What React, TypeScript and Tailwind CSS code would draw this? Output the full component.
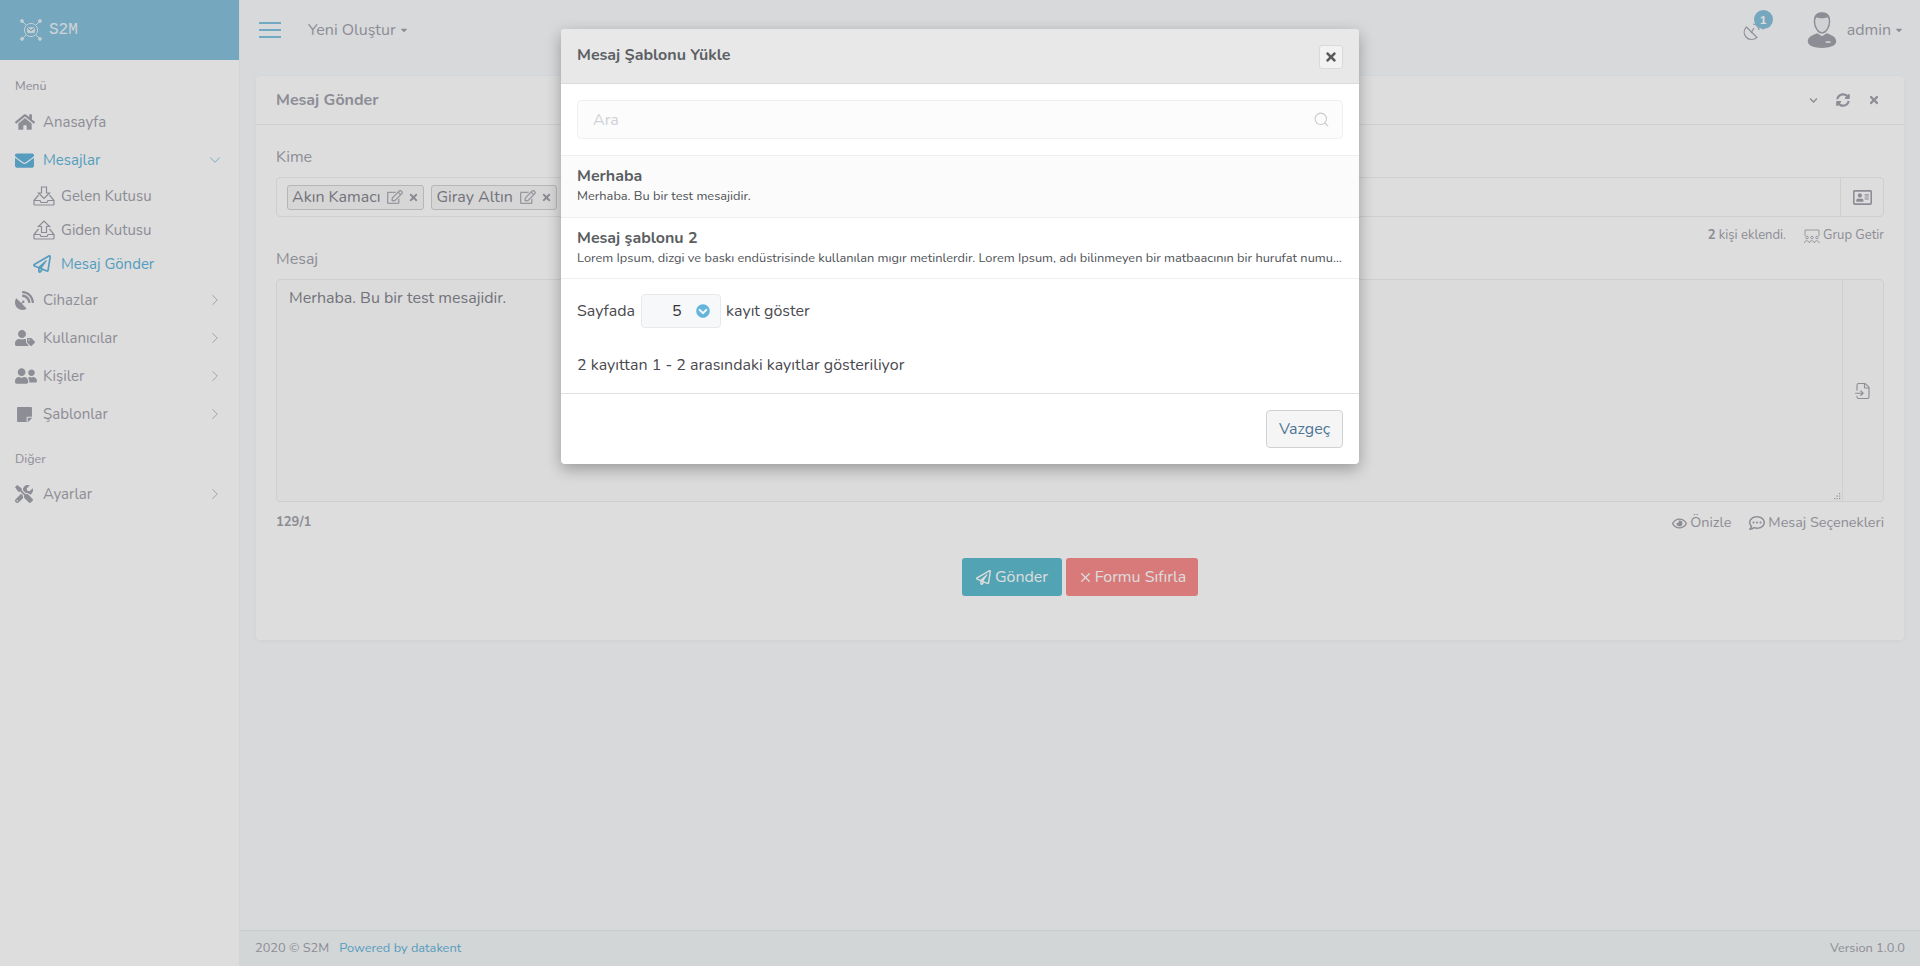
import React from "react";
import { ChevronDown, ChevronRight, X, Search, FileInput } from "lucide-react";
import {
  FaHome, FaEnvelope, FaUserTag, FaUserFriends, FaStickyNote, FaTools, FaSatelliteDish, FaRegPaperPlane,
  FaRegEdit, FaTimes, FaSyncAlt, FaChevronDown, FaRegAddressCard, FaRegEye, FaRegCommentDots, FaCaretDown, FaChevronCircleDown,
} from "react-icons/fa";

const Logo = () => (
  <svg width="22" height="22" viewBox="0 0 22 22" fill="none" stroke="#e4eef3" strokeWidth="1">
    <circle cx="11" cy="11" r="6.6" />
    <rect x="7.6" y="8.8" width="6.8" height="4.8" rx="0.6" fill="#e4eef3" />
    <path d="M7.8 9.2 11 11.6 14.2 9.2" stroke="#75a7be" />
    <path d="M2.5 2.5 6 6M19.5 2.5 16 6M2.5 19.5 6 16M19.5 19.5 16 16" />
    <circle cx="2" cy="2" r="1.4" fill="#e4eef3" /><circle cx="20" cy="2" r="1.4" fill="#e4eef3" />
    <circle cx="2" cy="20" r="1.4" fill="#e4eef3" /><circle cx="20" cy="20" r="1.4" fill="#e4eef3" />
  </svg>
);

const InboxDown = () => (
  <svg width="22" height="20" viewBox="0 0 22 20" fill="none" stroke="#a1a1ad" strokeWidth="1.2">
    <path d="M8.5 1h5v6h3L11 12.500 5.500 7h3z" />
    <path d="M5.500 9 1 14.500V18a1 1 0 0 0 1 1h18a1 1 0 0 0 1-1v-3.500L16.500 9" />
    <path d="M1 14.500h6l1 2h6l1-2h6" />
  </svg>
);
const InboxUp = () => (
  <svg width="22" height="20" viewBox="0 0 22 20" fill="none" stroke="#a1a1ad" strokeWidth="1.200">
    <path d="M8.500 12.500h5v-6h3L11 1 5.500 6.500h3z" />
    <path d="M5.500 9 1 14.500V18a1 1 0 0 0 1 1h18a1 1 0 0 0 1-1v-3.500L16.500 9" />
    <path d="M1 14.500h6l1 2h6l1-2h6" />
  </svg>
);
const DishOutline = () => (
  <svg width="21" height="22" viewBox="0 0 21 22" fill="none" stroke="#a8a8b2" strokeWidth="1.200">
    <path d="M3.500 8 14 18.500C10.500 21.500 5.500 21 3 18 .500 15 .500 11 3.500 8z" />
    <path d="M8 14 11 9" />
    <path d="M10 5a7 7 0 0 1 6 6M12 1.500a11 11 0 0 1 8 9" />
  </svg>
);
const Avatar = () => (
  <svg width="32" height="36" viewBox="0 0 32 38">
    <path d="M1 31c0-5 6-7 10-8.500l5 3 5-3c4 1.500 10 3.500 10 8.500 0 5-7 7-15 7S1 36 1 31z" fill="#a3a3ad" />
    <path d="M8 10c0-6 3-9 8-9s8 3 8 9c0 6-4 12-8 12s-8-6-8-12z" fill="#f2f3f5" stroke="#a3a3ad" strokeWidth="1.500" />
    <path d="M7.500 10C7 4 11 .500 16 .500S25 4 24.500 10c-1-3-2-4-3-4.500-3 1.500-9 1.500-11 0-1 1-2 2-3 4.500z" fill="#a3a3ad" />
    <rect x="20" y="31" width="5" height="1.500" fill="#fff" />
  </svg>
);
const GroupIcon = () => (
  <svg width="16" height="15" viewBox="0 0 16 15" fill="none" stroke="#a8a8b2" strokeWidth="0.900">
    <path d="M1 7V1h14v6" />
    <circle cx="3" cy="8.500" r="1.300" /><circle cx="8" cy="8.500" r="1.300" /><circle cx="13" cy="8.500" r="1.300" />
    <path d="M.5 14c0-3 4-3 5 0M5.500 14c0-3 4-3 5 0M10.500 14c0-3 4-3 5 0" />
  </svg>
);
const Grip = () => (
  <svg width="7" height="7" viewBox="0 0 7 7" fill="#a8a8b2">
    <rect x="5" y="0" width="1.200" height="1.200" /><rect x="2.500" y="2.500" width="1.200" height="1.200" /><rect x="5" y="2.500" width="1.200" height="1.200" />
    <rect x="0" y="5" width="1.200" height="1.200" /><rect x="2.500" y="5" width="1.200" height="1.200" /><rect x="5" y="5" width="1.200" height="1.200" />
  </svg>
);

function NavItem({ icon, label, active, open, plain }: { icon: React.ReactNode; label: string; active?: boolean; open?: boolean; plain?: boolean }) {
  return (
    <div className={`h-[38px] flex items-center pl-[15px] pr-[15px] text-[15px] ${active ? "text-[#5fb6dc]" : "text-[#a3a3ad]"}`}>
      <span className="w-[28px] shrink-0 flex items-center">{icon}</span>
      <span className="flex-1">{label}</span>
      {plain ? null : open ? <ChevronDown size={18} strokeWidth={1} /> : <ChevronRight size={18} strokeWidth={1} />}
    </div>
  );
}
function SubItem({ icon, label, active }: { icon: React.ReactNode; label: string; active?: boolean }) {
  return (
    <div className={`h-[34px] flex items-center pl-[33px] text-[15px] ${active ? "text-[#5fb6dc]" : "text-[#a3a3ad]"}`}>
      <span className="w-[28px] shrink-0 flex items-center">{icon}</span>
      <span>{label}</span>
    </div>
  );
}
function Tag({ label }: { label: string }) {
  return (
    <span className="h-[25px] flex items-center gap-[5px] px-[4px] border border-[#d2d2d6] rounded-[3px] bg-[#f7f7f7] text-[16px] text-[#85858e]">
      {label}
      <FaRegEdit size={16} className="text-[#b0b0b8] ml-[2px]" />
      <FaTimes size={11} className="text-[#a0a0a8]" />
    </span>
  );
}

export default function App() {
  return (
    <div className="relative h-[966px] overflow-hidden flex bg-[#fafbfd] font-['Nunito','Noto_Sans','Open_Sans',sans-serif] text-[#a3a3ad]">
      <aside className="w-[240px] shrink-0 bg-white border-r border-[#f4f5f7] flex flex-col">
        <div className="h-[60px] bg-[#88c2dd] flex items-center pl-[20px] gap-[7px] text-[#eef5f8] font-['Liberation_Mono',monospace] text-[16px]">
          <Logo />
          <span>S2M</span>
        </div>
        <div className="pt-[17px] pl-[15px] pb-[8px] text-[12.5px] leading-[18px]">Menü</div>
        <NavItem icon={<FaHome size={20} />} label="Anasayfa" plain />
        <NavItem icon={<FaEnvelope size={19} className="text-[#64b5dc]" />} label="Mesajlar" active open />
        <SubItem icon={<InboxDown />} label="Gelen Kutusu" />
        <SubItem icon={<InboxUp />} label="Giden Kutusu" />
        <SubItem icon={<FaRegPaperPlane size={18} className="text-[#64b5dc]" />} label="Mesaj Gönder" active />
        <NavItem icon={<FaSatelliteDish size={19} />} label="Cihazlar" />
        <NavItem icon={<FaUserTag size={20} />} label="Kullanıcılar" />
        <NavItem icon={<FaUserFriends size={22} />} label="Kişiler" />
        <NavItem icon={<FaStickyNote size={17} className="ml-[1px]" />} label="Şablonlar" />
        <div className="pt-[17px] pl-[15px] pb-[7px] text-[12.5px] leading-[18px]">Diğer</div>
        <NavItem icon={<FaTools size={18} />} label="Ayarlar" />
      </aside>

      <main className="flex-1 flex flex-col min-w-0">
        <header className="h-[60px] shrink-0 flex items-center pl-[19px] pr-[16px]">
          <div className="w-[22px] flex flex-col gap-[5px]">
            <span className="h-[2px] bg-[#80c4e0]" />
            <span className="h-[2px] bg-[#80c4e0]" />
            <span className="h-[2px] bg-[#80c4e0]" />
          </div>
          <span className="ml-[27px] text-[16px]">Yeni Oluştur</span>
          <FaCaretDown size={10} className="ml-[3px]" />
          <div className="ml-auto relative mr-[42px]">
            <DishOutline />
            <span className="absolute -top-[9px] left-[11px] w-[19px] h-[19px] rounded-full bg-[#88c2dd] text-white text-[12px] font-bold flex items-center justify-center">1</span>
          </div>
          <Avatar />
          <span className="ml-[9px] text-[16px]">admin</span>
          <FaCaretDown size={10} className="ml-[3px]" />
        </header>

        <section className="mt-[16px] ml-[16px] mr-[16px] h-[564px] bg-white rounded-[4px] shadow-[0_1px_4px_rgba(0,0,0,.05)]">
          <div className="h-[49px] border-b border-[#f0f0f2] flex items-center pl-[20px] pr-[24px]">
            <span className="font-bold text-[16px] leading-none">Mesaj Gönder</span>
            <FaChevronDown size={9} className="ml-auto" />
            <FaSyncAlt size={14} className="ml-[18px]" />
            <FaTimes size={12} className="ml-[18px]" />
          </div>
          <div className="px-[20px]">
            <div className="pt-[22px] text-[16px] leading-[20px]">Kime</div>
            <div className="mt-[10px] h-[40px] border border-[#efeff1] rounded-[4px] flex">
              <div className="flex-1 flex items-center gap-[7px] pl-[10px]">
                <Tag label="Akın Kamacı" />
                <Tag label="Giray Altın" />
              </div>
              <div className="w-[43px] border-l border-[#efeff1] flex items-center justify-center">
                <FaRegAddressCard size={19} />
              </div>
            </div>
            <div className="mt-[11px] h-[16px] flex items-center justify-end text-[13px]">
              <b>2</b>&nbsp;kişi eklendi.
              <span className="ml-[18px] mr-[3px]"><GroupIcon /></span>
              Grup Getir
            </div>
            <div className="pt-[5px] text-[16px] leading-[20px]">Mesaj</div>
            <div className="mt-[10px] h-[223px] border border-[#efeff1] rounded-[4px] flex bg-[#fdfdfd]">
              <div className="flex-1 relative px-[12px] py-[7px] text-[16px] leading-[22px] text-[#85858e]">
                Merhaba. Bu bir test mesajidir.
                <span className="absolute right-[1px] bottom-[1px] flex"><Grip /></span>
              </div>
              <div className="w-[41px] border-l border-[#efeff1] flex items-center justify-center">
                <FileInput size={18} strokeWidth={1.500} />
              </div>
            </div>
            <div className="mt-[12px] h-[18px] flex items-center text-[14.400px]">
              <b className="text-[13px]">129/1</b>
              <FaRegEye size={15} className="ml-auto mr-[3px]" />
              Önizle
              <FaRegCommentDots size={16} className="ml-[18px] mr-[3px]" />
              Mesaj Seçenekleri
            </div>
            <div className="mt-[26px] flex justify-center gap-[4px] text-[16px] text-white">
              <span className="h-[38px] w-[100px] bg-[#5fbdcf] rounded-[3px] flex items-center justify-center gap-[4px]">
                <FaRegPaperPlane size={15} /> Gönder
              </span>
              <span className="h-[38px] w-[132px] bg-[#fa8d8d] rounded-[3px] flex items-center justify-center gap-[2px]">
                <X size={15} /> Formu Sıfırla
              </span>
            </div>
          </div>
        </section>

        <footer className="mt-auto h-[36px] border-t border-[#e8ebee] bg-[#f4f7f8] flex items-center pl-[15px] pr-[15px] text-[12.800px]">
          <span>2020 © S2M</span>
          <span className="ml-[10px] text-[#64b5dc]">Powered by datakent</span>
          <span className="ml-auto">Version 1.0.0</span>
        </footer>
      </main>

      <div className="absolute inset-0 bg-black/[.135]" />

      <div className="absolute left-[561px] top-[29px] w-[798px] h-[435px] bg-white rounded-[4px] shadow-[0_5px_15px_rgba(0,0,0,.3)] text-[#4a4a4f]">
        <div className="h-[55px] bg-[#e8e8e8] border-b border-[#dcdcdc] rounded-t-[4px] flex items-center pl-[16px] pr-[16px]">
          <span className="font-bold text-[16px] text-[#5c6064] -mt-[2px]">Mesaj Şablonu Yükle</span>
          <span className="ml-auto w-[24px] h-[24px] mt-[2px] bg-[#f2f2f2] border border-[#dadada] rounded-[3px] flex items-center justify-center">
            <FaTimes size={14} className="text-[#5a5a5a]" />
          </span>
        </div>
        <div className="px-[16px] pt-[16px] pb-[16px]">
          <div className="h-[39px] bg-[#fcfcfc] border border-[#eef0f2] rounded-[4px] flex items-center pl-[15px] pr-[12px]">
            <span className="text-[16px] text-[#cfd2d6]">Ara</span>
            <Search size={17} strokeWidth={1.500} className="ml-auto text-[#c8c8c8]" />
          </div>
        </div>
        <div className="h-[63px] bg-[#fbfbfb] border-y border-[#eeeeee] px-[16px] pt-[10px]">
          <div className="font-bold text-[16px] leading-[20px] text-[#5a5e62]">Merhaba</div>
          <div className="text-[12.800px] leading-[21px] text-[#4e5256]">Merhaba. Bu bir test mesajidir.</div>
        </div>
        <div className="h-[61px] border-b border-[#eeeeee] px-[16px] pt-[10px]">
          <div className="font-bold text-[16px] leading-[20px] text-[#5a5e62]">Mesaj şablonu 2</div>
          <div className="text-[12.800px] leading-[21px] text-[#4e5256] truncate">Lorem Ipsum, dizgi ve baskı endüstrisinde kullanılan mıgır metinlerdir. Lorem Ipsum, adı bilinmeyen bir matbaacının bir hurufat numunesini alıp</div>
        </div>
        <div className="h-[34px] mt-[15px] px-[16px] flex items-center text-[16px]">
          <span>Sayfada</span>
          <span className="ml-[6px] w-[80px] h-[34px] bg-[#f6f8fa] border border-[#e6e8ea] rounded-[4px] flex items-center pl-[30px] pr-[10px] text-[#333]">
            5
            <FaChevronCircleDown size={14} className="ml-auto text-[#64b5dc]" />
          </span>
          <span className="ml-[5px]">kayıt göster</span>
        </div>
        <div className="mt-[26px] px-[16px] text-[16px] leading-[22px]">2 kayıttan 1 - 2 arasındaki kayıtlar gösteriliyor</div>
        <div className="mt-[17px] h-[71px] border-t border-[#e0e0e0] flex items-start justify-end pt-[16px] pr-[16px]">
          <span className="w-[77px] h-[38px] bg-[#f5f5f5] border border-[#cfd3d6] rounded-[4px] flex items-center justify-center text-[16px] text-[#4d7596]">Vazgeç</span>
        </div>
      </div>
    </div>
  );
}
